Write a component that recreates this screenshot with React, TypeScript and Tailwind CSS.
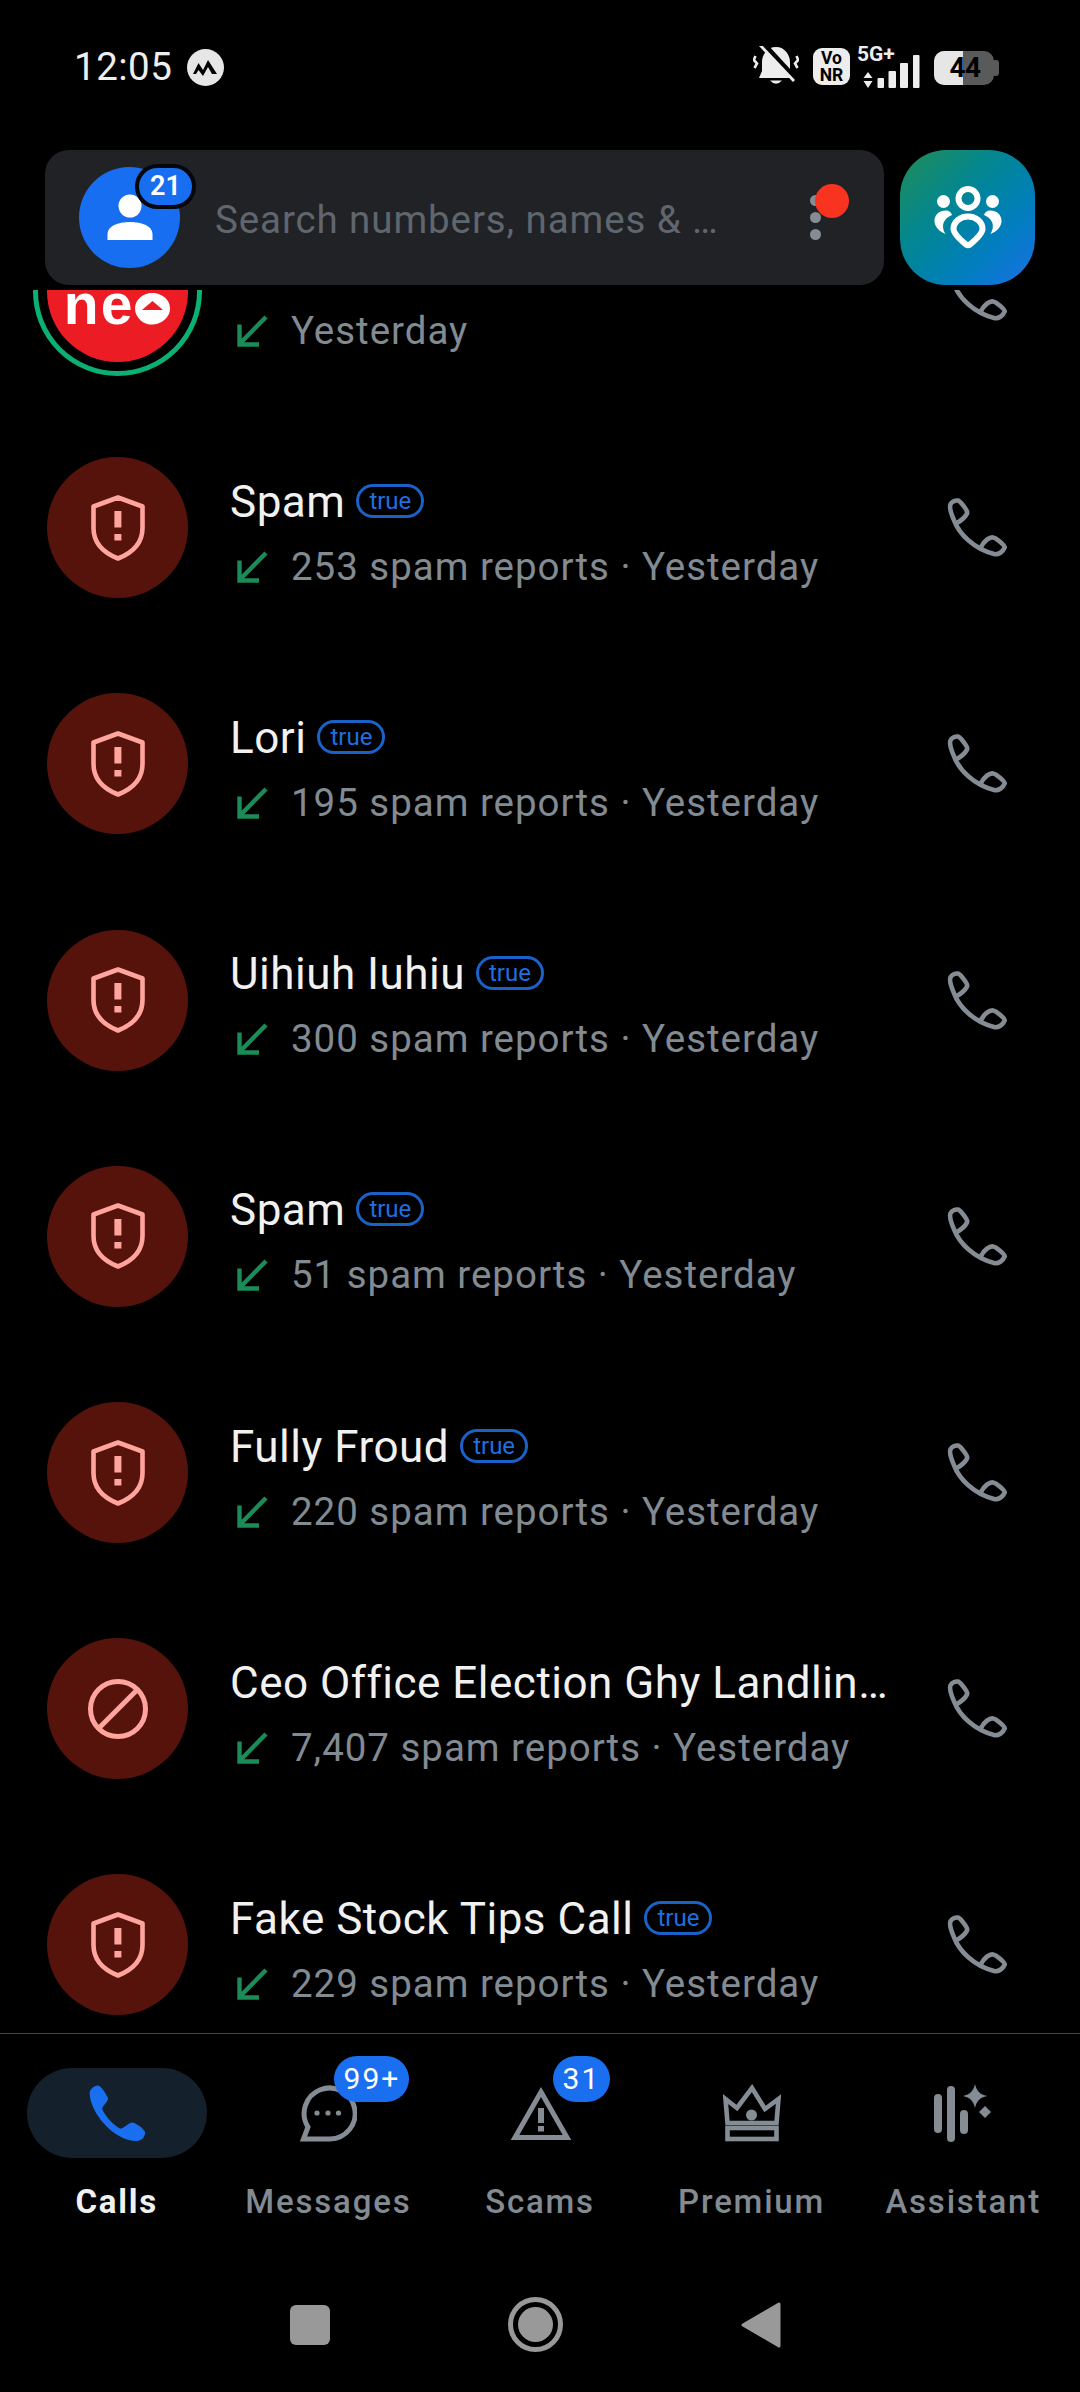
import React from "react";

const PHONE_OUTLINE =
  "M176 124 C170 122 158 126 154 134 C150 142 156 165 165 185 C180 225 225 270 285 285 C298 288 312 278 317 265 C318 258 290 236 282 235 C272 233 255 245 245 265 M176 124 C182 124 204 152 204 160 C203 170 185 185 172 192";

function PhoneOutline() {
  return (
    <svg width="63" height="63" viewBox="140 110 190 190" fill="none" stroke="#858c94" strokeWidth="14" strokeLinejoin="round" strokeLinecap="round">
      <path d={PHONE_OUTLINE} />
    </svg>
  );
}

function Shield() {
  return (
    <svg width="54" height="66" viewBox="0 0 54 66">
      <path d="M27 2.500 L51.500 11.500 V33 C51.500 48 41 58 27 63.500 C13 58 2.500 48 2.500 33 V11.500 Z" fill="none" stroke="#ffa59e" strokeWidth="4.6" strokeLinejoin="round" />
      <rect x="23.400" y="16" width="7" height="16.500" fill="#ffa59e" />
      <rect x="23.400" y="39" width="7" height="6.500" fill="#ffa59e" />
    </svg>
  );
}

function Block() {
  return (
    <svg width="60" height="60" viewBox="0 0 60 60" fill="none" stroke="#ffa59e" strokeWidth="5">
      <circle cx="30" cy="30" r="27.500" />
      <path d="M11 49 L49 11" />
    </svg>
  );
}

function NeoLogo() {
  return (
    <div className="relative flex h-[169px] w-[169px] shrink-0 items-center justify-center rounded-full border-[5px] border-[#0bb073]">
      <div className="relative flex h-[141px] w-[141px] items-start justify-center rounded-full bg-[#ec1c24] pt-[68px]">
        <span className="font-['Liberation_Sans',sans-serif] text-[57px] font-bold leading-[30px] tracking-[2px] text-white">neo</span>
        <svg width="35" height="31" viewBox="0 0 35 31" className="absolute left-[88px] top-[72px]">
          <ellipse cx="17.500" cy="15.500" rx="17.500" ry="15.500" fill="white" />
          <path d="M17.500 8 L28 17 H7 Z" fill="#ec1c24" />
        </svg>
      </div>
    </div>
  );
}

function Row({ name, sub, tag = true, icon = "shield" }: { name: string; sub: string; tag?: boolean; icon?: string }) {
  return (
    <div className="flex h-[236.2px] items-center">
      <div className="flex w-[230px] shrink-0 justify-start pl-[47px]">
        {icon === "neo" ? (
          <div className="-ml-[14px]"><NeoLogo /></div>
        ) : (
          <div className="flex h-[141px] w-[141px] items-center justify-center rounded-full bg-[#56130c]">
            {icon === "block" ? <Block /> : <Shield />}
          </div>
        )}
      </div>
      <div className="min-w-0 flex-1 pt-[13px]">
        <div className="flex h-[60px] items-center">
          <span className="whitespace-nowrap text-[44px] leading-[60px] tracking-[0.5px] text-[#f1f1f1]">{name}</span>
          {tag && (
            <span className="ml-[11px] flex h-[34px] w-[68px] shrink-0 -translate-y-[1px] items-center justify-center rounded-full border-[3px] border-[#1a62c8] text-[24px] leading-none text-[#1f6fe0]">true</span>
          )}
        </div>
        <div className="mt-[5px] flex h-[60px] items-center">
          <svg width="32" height="32" viewBox="0 0 32 32" className="ml-[6px] shrink-0" fill="none" stroke="#1b8c58" strokeWidth="4.4">
            <path d="M30 2 L3.500 29 M3.500 9.500 V29.500 H23" />
          </svg>
          <span className="ml-[23px] whitespace-nowrap text-[38.5px] leading-[60px] tracking-[0.97px] text-[#828a92]">{sub}</span>
        </div>
      </div>
      <div className="mr-[71px] flex w-[63px] shrink-0 justify-center">
        <PhoneOutline />
      </div>
    </div>
  );
}

function TeamIcon() {
  return (
    <svg width="70" height="68" viewBox="0 0 70 68" fill="white">
      <circle cx="35" cy="14.500" r="9.500" fill="none" stroke="white" strokeWidth="6" />
      <circle cx="10.500" cy="17.500" r="6.500" />
      <circle cx="59.500" cy="17.500" r="6.500" />
      <path d="M13 26.500 C5 26.500 1 32 1.500 38 C2 43 7 48 12.500 50 C9 44 8 36 19 31 C18 28 16 26.500 13 26.500 Z" />
      <path d="M57 26.500 C65 26.500 69 32 68.500 38 C68 43 63 48 57.500 50 C61 44 62 36 51 31 C52 28 54 26.500 57 26.500 Z" />
      <path d="M35 32.500 C43 32.500 49.500 38 49.500 45 C49.500 50 40 58 37 60.500 Q35 62 33 60.500 C30 58 20.500 50 20.500 45 C20.500 38 27 32.500 35 32.500 Z" fill="none" stroke="white" strokeWidth="6" strokeLinejoin="round" />
    </svg>
  );
}

function StatusIcons() {
  return (
    <div className="flex h-[50px] items-start">
      <svg width="46" height="40" viewBox="0 0 46 40" className="mt-[1px]">
        <path d="M23 1 C14 1 9 9 9 16 V25 L6 32 H40 L37 25 V16 C37 9 32 1 23 1 Z" fill="#ededed" />
        <path d="M17 34.500 Q23 41 29 34.500 Z" fill="#ededed" />
        <path d="M10 -2 L45 36" stroke="#000" strokeWidth="6" />
        <path d="M7 -1 L41 35" stroke="#ededed" strokeWidth="2.800" />
        <path d="M2.500 10 L0.800 14 L4 17.500 L1.500 22" stroke="#ededed" strokeWidth="2.600" fill="none" />
        <path d="M43.500 10 L45.200 14 L42 17.500 L44.500 22" stroke="#ededed" strokeWidth="2.600" fill="none" />
      </svg>
      <div className="ml-[14px] mt-[3px] flex h-[37px] w-[37px] flex-col items-center justify-center rounded-[9px] bg-[#ededed] text-[17.5px] font-bold leading-[17px] text-black">
        <span>Vo</span>
        <span>NR</span>
      </div>
      <div className="ml-[7px] flex h-[40px] w-[66px] flex-col">
        <span className="h-[18px] text-[21px] font-bold leading-[18px] text-[#ededed]">5G+</span>
      </div>
      <div className="-ml-[66px] mt-[4px]">
        <svg width="64" height="40" viewBox="0 0 64 40" fill="#ededed">
          <path d="M11 23 L15.500 29 L6.500 29 Z M11 39 L15.500 32 L6.500 32 Z" />
          <rect x="20.500" y="29" width="6.500" height="10" rx="1" />
          <rect x="31.500" y="22" width="7.500" height="17" rx="1" />
          <rect x="43" y="14" width="8" height="25" rx="1" />
          <rect x="56" y="6" width="6.500" height="33" rx="1" />
        </svg>
      </div>
      <div className="relative ml-[13px] mt-[6px] flex h-[34px] w-[60px] overflow-hidden rounded-[10px] bg-[#5a5a5a]">
        <div className="h-full w-[29px] bg-[#e6e6e6]" />
        <span className="absolute inset-0 flex items-center justify-center pl-[2px] text-[28px] font-bold leading-none tracking-[-0.5px] text-black">44</span>
      </div>
      <div className="mt-[15px] h-[16px] w-[5px] rounded-r-[3px] bg-[#5a5a5a]" />
    </div>
  );
}

function TabIcon({ id }: { id: string }) {
  if (id === "calls")
    return (
      <svg width="56" height="56" viewBox="148 118 172 172" fill="#1a6ff0">
        <path d="M178 120 C165 118 150 130 150 145 C152 200 220 290 295 290 C310 290 322 275 320 262 C318 252 288 232 280 233 C270 234 258 248 246 252 C225 245 195 210 188 190 C192 180 208 168 206 158 C204 150 186 122 178 120 Z" />
      </svg>
    );
  if (id === "messages")
    return (
      <svg width="58" height="58" viewBox="0 0 58 58" fill="none" stroke="#858c94" strokeWidth="5">
        <path d="M4.500 55 H31 A25.500 25.500 0 1 0 9 43 Z" />
        <circle cx="18" cy="29" r="2.600" fill="#858c94" stroke="none" />
        <circle cx="29" cy="29" r="2.600" fill="#858c94" stroke="none" />
        <circle cx="39.500" cy="29" r="2.600" fill="#858c94" stroke="none" />
      </svg>
    );
  if (id === "scams")
    return (
      <svg width="62" height="56" viewBox="0 0 62 56" fill="none" className="translate-x-[1px]">
        <path d="M31 7 L57 52.500 H5 Z" stroke="#858c94" strokeWidth="5" />
        <rect x="28" y="23" width="6" height="15" fill="#858c94" />
        <rect x="28" y="41" width="6" height="5.500" fill="#858c94" />
      </svg>
    );
  if (id === "premium")
    return (
      <svg width="58" height="58" viewBox="0 0 58 58" fill="none" stroke="#858c94" strokeWidth="4.6">
        <path d="M2.500 15 L14 24 L29 4 L42 25 L55.500 15 L53.500 39 H4.500 Z" />
        <rect x="4.500" y="44" width="49" height="11" />
        <circle cx="28.500" cy="31" r="5.500" fill="#858c94" stroke="none" />
      </svg>
    );
  return (
    <svg width="60" height="58" viewBox="0 0 60 58" fill="#858c94">
      <rect x="1" y="10" width="8" height="39" rx="4" />
      <rect x="14" y="2" width="8" height="56" rx="4" />
      <rect x="27" y="26" width="8" height="24" rx="4" />
      <path d="M42 0 C43.500 7 47 10.500 54 12 C47 13.500 43.500 17 42 24 C40.500 17 37 13.500 30 12 C37 10.500 40.500 7 42 0 Z" />
      <path d="M52 22 L58 28 L52 34 L46 28 Z" />
    </svg>
  );
}

const TABS = [
  { id: "calls", label: "Calls" },
  { id: "messages", label: "Messages", badge: "99+" },
  { id: "scams", label: "Scams", badge: "31" },
  { id: "premium", label: "Premium" },
  { id: "assistant", label: "Assistant" },
];

function Tab({ id, label, badge }: { id: string; label: string; badge?: string }) {
  const active = id === "calls";
  return (
    <div className="flex flex-col items-center">
      <div className={`relative flex h-[90px] w-[180px] items-center justify-center rounded-full ${active ? "bg-[#14202c]" : ""}`}>
        <TabIcon id={id} />
        {badge && (
          <span
            className={`absolute top-[-12px] flex h-[46px] items-center justify-center rounded-full bg-[#1a6ff0] text-[30px] leading-none tracking-[2px] text-white ${
              badge === "31" ? "left-[103px] w-[57px]" : "left-[96px] w-[75px]"
            }`}
          >
            {badge}
          </span>
        )}
      </div>
      <span className={`mt-[22px] whitespace-nowrap text-[33px] leading-[44px] tracking-[1.8px] ${active ? "font-bold text-[#f1f1f1]" : "font-medium text-[#828a92]"}`}>{label}</span>
    </div>
  );
}

const ROWS = [
  { name: "Spam", sub: "253 spam reports · Yesterday" },
  { name: "Lori", sub: "195 spam reports · Yesterday" },
  { name: "Uihiuh Iuhiu", sub: "300 spam reports · Yesterday" },
  { name: "Spam", sub: "51 spam reports · Yesterday" },
  { name: "Fully Froud", sub: "220 spam reports · Yesterday" },
  { name: "Ceo Office Election Ghy Landlin…", sub: "7,407 spam reports · Yesterday", tag: false, icon: "block" },
  { name: "Fake Stock Tips Call", sub: "229 spam reports · Yesterday" },
];

export default function App() {
  return (
    <div className="flex h-[2392px] w-[1080px] flex-col overflow-hidden bg-black font-['Roboto',sans-serif]">
      <div className="flex h-[150px] shrink-0 items-start justify-between pl-[74px] pr-[81px] pt-[45px]">
        <div className="flex items-center">
          <span className="text-[38.5px] leading-[44px] tracking-[0.5px] text-[#eeeeee]">12:05</span>
          <svg width="37" height="37" viewBox="0 0 37 37" className="ml-[15px]">
            <circle cx="18.500" cy="18.500" r="18.500" fill="#e6e6e6" />
            <path d="M6 25 L11.500 14 L16 21 L21 11 L30 25 L25 25 L21 18 L16 27 L11.500 21 L9 25 Z" fill="#000" />
          </svg>
        </div>
        <StatusIcons />
      </div>

      <div className="flex h-[135px] shrink-0 gap-[16px] pl-[45px] pr-[45px]">
        <div className="flex min-w-0 flex-1 items-center rounded-[24px] bg-[#212226] pl-[34px]">
          <div className="relative flex h-[101px] w-[101px] shrink-0 items-end justify-center rounded-full bg-[#186ef0]">
            <svg width="46" height="46" viewBox="0 0 46 46" fill="white" className="mb-[28px]">
              <circle cx="23" cy="12" r="11.500" />
              <path d="M0.500 46 V40 C0.500 32 11 28 23 28 C35 28 45.500 32 45.500 40 V46 Z" />
            </svg>
            <span className="absolute left-[56px] top-[-3px] flex h-[45px] w-[61px] items-center justify-center rounded-full border-[4px] border-[#05070d] bg-[#186ef0] text-[27px] font-semibold leading-none text-white">21</span>
          </div>
          <span className="ml-[35px] w-[500px] shrink-0 translate-y-[2px] whitespace-nowrap text-[38.5px] leading-[48px] tracking-[0.9px] text-[#5f666e]">Search numbers, names &amp; …</span>
          <div className="relative ml-[95px] flex flex-col gap-[6px]">
            <span className="h-[11px] w-[11px] rounded-full bg-[#858c94]" />
            <span className="h-[11px] w-[11px] rounded-full bg-[#858c94]" />
            <span className="h-[11px] w-[11px] rounded-full bg-[#858c94]" />
            <span className="absolute left-[5px] top-[-11px] h-[34px] w-[34px] rounded-full bg-[#f8331f]" />
          </div>
        </div>
        <div className="flex h-[135px] w-[135px] shrink-0 items-center justify-center rounded-[46px] bg-gradient-to-br from-[#1f8c54] to-[#1a6fe8]">
          <TeamIcon />
        </div>
      </div>

      <div className="mt-[5px] h-[1743px] shrink-0 overflow-hidden">
        <div className="-mt-[116.500px]">
          <Row name="" sub="Yesterday" tag={false} icon="neo" />
          {ROWS.map((r, i) => (
            <Row key={i} name={r.name} sub={r.sub} tag={r.tag !== false} icon={r.icon ?? "shield"} />
          ))}
        </div>
      </div>

      <div className="shrink-0 border-t-[1px] border-[#444444]">
        <div className="grid grid-cols-5 px-[11px] pt-[34px]">
          {TABS.map((t) => (
            <Tab key={t.id} id={t.id} label={t.label} badge={t.badge} />
          ))}
        </div>
        <div className="mt-[73px] flex items-center justify-center pr-[9px]">
          <div className="mr-[178px] h-[40px] w-[40px] rounded-[6px] bg-[#999999]" />
          <div className="flex h-[55px] w-[55px] items-center justify-center rounded-full border-[5px] border-[#999999]">
            <div className="h-[35px] w-[35px] rounded-full bg-[#999999]" />
          </div>
          <svg width="40" height="46" viewBox="0 0 40 46" className="ml-[178px]" fill="#999999" stroke="#999999" strokeWidth="3" strokeLinejoin="round">
            <path d="M2 23 L38 2 V44 Z" />
          </svg>
        </div>
      </div>
    </div>
  );
}
